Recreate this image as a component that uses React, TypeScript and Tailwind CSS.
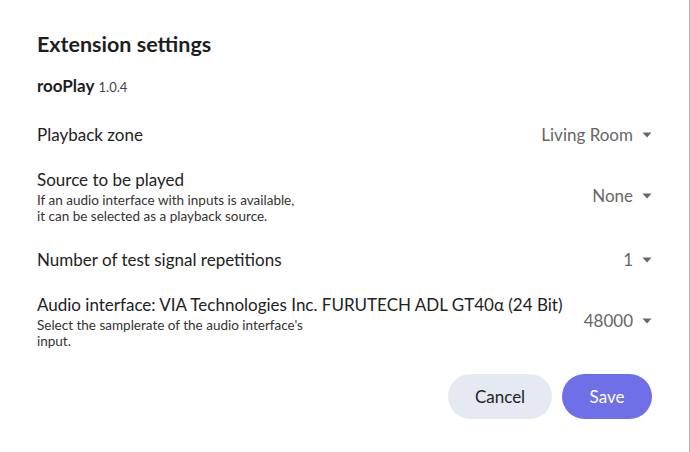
import { ReactNode } from 'react';

type Row = {
  label: string;
  help?: string[];
  value: string;
};

const rows: Row[] = [
  { label: 'Playback zone', value: 'Living Room' },
  {
    label: 'Source to be played',
    help: ['If an audio interface with inputs is available,', 'it can be selected as a playback source.'],
    value: 'None',
  },
  { label: 'Number of test signal repetitions', value: '1' },
  {
    label: 'Audio interface: VIA Technologies Inc. FURUTECH ADL GT40α (24 Bit)',
    help: ["Select the samplerate of the audio interface's", 'input.'],
    value: '48000',
  },
];

function Caret() {
  return (
    <svg width="10" height="6" viewBox="0 0 10 6" className="ml-[9px] shrink-0">
      <path d="M0.5 0.5 L9.5 0.5 L5 5.5 Z" fill="#666666" />
    </svg>
  );
}

function Dropdown({ value }: { value: string }) {
  return (
    <div className="flex shrink-0 items-center text-[17px] leading-[24px] text-[#666666]">
      {value}
      <Caret />
    </div>
  );
}

function SettingRow({ row, className }: { row: Row; className?: string }): ReactNode {
  return (
    <div className={`flex items-center justify-between gap-4 ${className ?? ''}`}>
      <div className="min-w-0">
        <div className="text-[17px] leading-[24px] text-[#222222]">{row.label}</div>
        {row.help && (
          <div className="mt-px text-[13.5px] leading-[15.5px] text-[#333333]">
            {row.help.map((line) => (
              <div key={line}>{line}</div>
            ))}
          </div>
        )}
      </div>
      <Dropdown value={row.value} />
    </div>
  );
}

export default function App() {
  return (
    <div
      className="h-[452px] w-[690px] overflow-hidden border-r border-[#b4b4b4] bg-white"
      style={{ fontFamily: 'Lato, "Noto Sans", sans-serif' }}
    >
      <div className="pl-[37px] pr-[37px] pt-[31px]">
        <h1 className="text-[21.5px] font-bold leading-[26px] text-[#1e1e1e]">Extension settings</h1>
        <div className="mt-[19px] leading-[20px] text-[#1e1e1e]">
          <span className="text-[17px] font-bold">rooPlay</span>{' '}
          <span className="text-[13px] text-[#444444]">1.0.4</span>
        </div>

        <SettingRow row={rows[0]} className="mt-[26px]" />
        <SettingRow row={rows[1]} className="mt-[21px]" />
        <SettingRow row={rows[2]} className="mt-[24px]" />
        <SettingRow row={rows[3]} className="mt-[21px]" />

        <div className="mt-[25px] flex justify-end gap-[10px]">
          <button className="h-[45px] w-[104px] rounded-full bg-[#e5e9f2] text-[17px] text-[#222222]">
            Cancel
          </button>
          <button className="h-[45px] w-[90px] rounded-full bg-[#6f6fe8] text-[17px] text-white">
            Save
          </button>
        </div>
      </div>
    </div>
  );
}
